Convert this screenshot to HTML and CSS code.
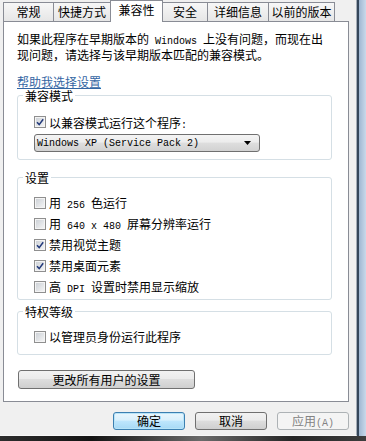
FILE: index.html
```html
<!DOCTYPE html>
<html lang="zh-CN">
  <head>
    <meta charset="UTF-8" />
    <title>兼容性</title>
    <link rel="stylesheet" href="styles.css">
  </head>
  <body>
    <div class="window">
      <div class="dialog">
        <!-- tab strip -->
        <div class="tabs">
          <div class="tab t-general">常规</div>
          <div class="tab t-shortcut">快捷方式</div>
          <div class="tab active t-compat">兼容性</div>
          <div class="tab t-security">安全</div>
          <div class="tab t-details">详细信息</div>
          <div class="tab t-previous">以前的版本</div>
        </div>

        <!-- compatibility page -->
        <div class="panel">
          <p class="desc">如果此程序在早期版本的<span class="latin"> Windows </span>上没有问题，而现在出<br>现问题，请选择与该早期版本匹配的兼容模式。</p>
          <a class="help" href="#">帮助我选择设置</a>

          <fieldset class="group compat">
            <legend>兼容模式</legend>
            <div class="row tight">
              <span class="check on"><svg viewBox="0 0 10 10"><path d="M2 5.2 L4.2 7.6 L8.2 2.2" /></svg></span>
              <span>以兼容模式运行这个程序<span class="latin">:</span></span>
            </div>
            <div class="select">
              <span class="latin">Windows XP (Service Pack 2)</span>
              <svg class="arrow" viewBox="0 0 7 4"><path d="M0 0 H7 L3.5 4 Z" /></svg>
            </div>
          </fieldset>

          <fieldset class="group settings">
            <legend>设置</legend>
            <div class="row">
              <span class="check"></span>
              <span>用<span class="latin"> 256 </span>色运行</span>
            </div>
            <div class="row">
              <span class="check"></span>
              <span>用<span class="latin"> 640 x 480 </span>屏幕分辨率运行</span>
            </div>
            <div class="row">
              <span class="check on"><svg viewBox="0 0 10 10"><path d="M2 5.2 L4.2 7.6 L8.2 2.2" /></svg></span>
              <span>禁用视觉主题</span>
            </div>
            <div class="row">
              <span class="check on"><svg viewBox="0 0 10 10"><path d="M2 5.2 L4.2 7.6 L8.2 2.2" /></svg></span>
              <span>禁用桌面元素</span>
            </div>
            <div class="row">
              <span class="check"></span>
              <span>高<span class="latin"> DPI </span>设置时禁用显示缩放</span>
            </div>
          </fieldset>

          <fieldset class="group privilege">
            <legend>特权等级</legend>
            <div class="row">
              <span class="check"></span>
              <span>以管理员身份运行此程序</span>
            </div>
          </fieldset>

          <button class="btn all-users">更改所有用户的设置</button>
        </div>

        <!-- dialog buttons -->
        <div class="actions">
          <button class="btn default">确定</button>
          <button class="btn">取消</button>
          <button class="btn disabled">应用<span class="latin">(A)</span></button>
        </div>
      </div>
      <div class="edge"></div>
    </div>
    <div class="edge-bottom"></div>
  </body>
</html>
```

FILE: styles.css
```css
body {
  margin: 0;
  background: #bccfe4;
  font-family: "Noto Sans CJK SC", sans-serif;
  font-size: 12px;
  color: #000;
}
.window {
  display: flex;
  height: 436px;
}
.dialog {
  width: 356px;
  background: #f0f0f0;
  border-right: 1px solid #a4acb6;
  border-bottom: 1px solid #f8f8f8;
}
.edge {
  flex: 1;
  background: linear-gradient(to right, #34465a 0, #34465a 2px, #9fb7d2 2px, #c9d9ea);
}
.edge-bottom {
  height: 5px;
  background: linear-gradient(to right, #2d2d2d, #141414 25%, #6a6a6a 55%, #262626 80%, #3d3d3d);
}
.latin {
  font-family: "Liberation Mono", monospace;
  font-size: 10px;
  white-space: pre;
}

/* tabs */
.tabs {
  display: flex;
  align-items: flex-end;
  height: 21px;
  padding-left: 3px;
}
.tab {
  box-sizing: border-box;
  height: 19px;
  margin-right: -1px;
  border: 1px solid #898c95;
  border-bottom: 0;
  background: linear-gradient(#f7f7f7, #e6e6e6);
  line-height: 17px;
  text-align: center;
}
.tab.active {
  position: relative;
  z-index: 1;
  height: 22px;
  margin-bottom: -1px;
  background: #fff;
  line-height: 18px;
}
.t-general { width: 51px; }
.t-shortcut { width: 58px; }
.t-compat { width: 53px; }
.t-security { width: 46px; }
.t-details { width: 62px; }
.t-previous { width: 67px; }

/* page */
.panel {
  box-sizing: border-box;
  width: 346px;
  height: 381px;
  margin-left: 3px;
  padding: 10px 0 0 13px;
  border: 1px solid #898c95;
  background: #fff;
}
.desc {
  margin: 0;
  line-height: 13px;
}
.help {
  display: block;
  margin-top: 14px;
  line-height: 13px;
  color: #3466a3;
  width: max-content;
}

.group {
  box-sizing: border-box;
  width: 315px;
  min-width: 0;
  margin: 0;
  padding: 0;
  border: 1px solid #d5dfe5;
  border-radius: 3px;
}
.group legend {
  margin-left: 5px;
  padding: 0 2px;
  line-height: 13px;
}
.compat {
  margin-top: 1px;
  padding-top: 12px;
  padding-bottom: 7px;
}
.settings {
  margin-top: 11px;
  padding-top: 8px;
  padding-bottom: 2px;
}
.privilege {
  margin-top: 5px;
  padding-top: 8px;
  padding-bottom: 7px;
}

.row {
  display: flex;
  align-items: center;
  gap: 3px;
  height: 21px;
  padding-left: 16px;
}
.row.tight {
  height: 16px;
}
.check {
  box-sizing: border-box;
  display: inline-block;
  width: 12px;
  height: 12px;
  border: 1px solid #8f8f8f;
  box-shadow: inset 0 0 0 1px #f4f4f4;
  background: linear-gradient(135deg, #c9ced4, #f7f7f7);
}
.check svg {
  display: block;
  width: 10px;
  height: 10px;
}
.check svg path {
  fill: none;
  stroke: #22397a;
  stroke-width: 1.5;
}

.select {
  box-sizing: border-box;
  display: flex;
  align-items: center;
  justify-content: space-between;
  width: 226px;
  height: 18px;
  margin: 4px 0 0 16px;
  padding: 0 8px 0 2px;
  border: 1px solid #707070;
  border-radius: 3px;
  background: linear-gradient(#f4f4f4, #ececec 45%, #dedede 50%, #d2d2d2);
}
.arrow {
  width: 7px;
  height: 4px;
}

/* buttons */
.btn {
  box-sizing: border-box;
  height: 19px;
  padding: 0;
  border: 1px solid #707070;
  border-radius: 3px;
  background: linear-gradient(#f2f2f2, #ebebeb 45%, #dddddd 50%, #cfcfcf);
  font-family: "Noto Sans CJK SC", sans-serif;
  font-size: 12px;
  line-height: 16px;
  color: #000;
}
.all-users {
  display: block;
  width: 177px;
  margin: 15px 0 0 1px;
}
.actions {
  display: flex;
  justify-content: flex-end;
  gap: 10px;
  padding: 10px 7px 0 0;
}
.actions .btn {
  width: 72px;
  height: 18px;
}
.btn.default {
  border-color: #3c7fb1;
  background: linear-gradient(#eaf6fd, #d9f0fc 45%, #bee6fd 50%, #a7d9f5);
  box-shadow: inset 0 0 0 1px #b8e4f8;
}
.btn.disabled {
  border-color: #adb2b5;
  background: #f4f4f4;
  color: #838383;
}
```
